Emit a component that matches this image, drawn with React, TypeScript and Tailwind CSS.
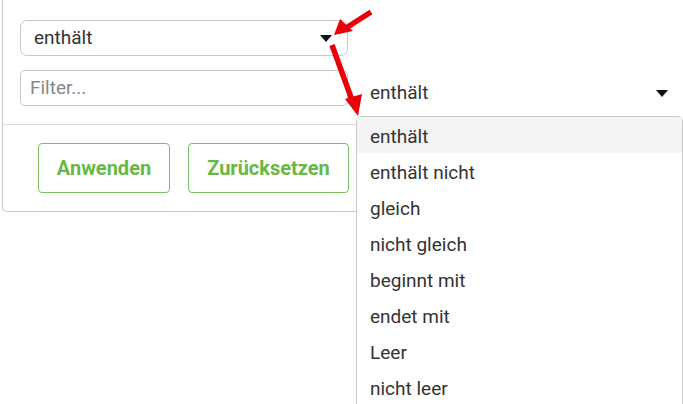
const options = [
  "enthält",
  "enthält nicht",
  "gleich",
  "nicht gleich",
  "beginnt mit",
  "endet mit",
  "Leer",
  "nicht leer",
];

function Caret() {
  return (
    <svg width="12" height="7" viewBox="0 0 12 7" className="shrink-0">
      <polygon points="0,0 12,0 6,7" fill="#111" />
    </svg>
  );
}

export default function App() {
  return (
    <div
      className="relative flex w-[683px] h-[404px] overflow-hidden bg-white text-[#333]"
      style={{ fontFamily: "Roboto, 'Liberation Sans', sans-serif" }}
    >
      {/* Filter panel */}
      <div className="ml-[2px] w-[354px] h-[212px] shrink-0 border-l border-b border-[#c8c8c8] rounded-bl-[5px] flex flex-col">
        <div className="px-[17px] pt-[20px] pb-[18px] border-b border-[#dcdcdc] flex flex-col gap-[14px]">
          <div className="w-[328px] h-[36px] border border-[#c8c8c8] rounded-[7px] flex items-center justify-between pl-[13px] pr-[15px]">
            <span className="text-[19px]">enthält</span>
            <Caret />
          </div>
          <div className="w-[328px] h-[36px] border border-[#c8c8c8] rounded-[5px] flex items-center pl-[9px]">
            <span className="text-[19px] text-[#888]">Filter...</span>
          </div>
        </div>
        <div className="flex gap-[18px] pl-[35px] pt-[18px]">
          <button className="w-[132px] h-[50px] border border-[#7cc062] rounded-[4px] text-[20px] font-bold text-[#68b845]">
            Anwenden
          </button>
          <button className="w-[161px] h-[50px] border border-[#7cc062] rounded-[4px] text-[20px] font-bold text-[#68b845]">
            Zurücksetzen
          </button>
        </div>
      </div>

      {/* Open select */}
      <div className="flex-1 flex flex-col pt-[75px]">
        <div className="h-[36px] shrink-0 flex items-center justify-between pl-[14px] pr-[15px]">
          <span className="text-[19px]">enthält</span>
          <Caret />
        </div>
        <ul className="mt-[5px] h-[320px] shrink-0 border border-[#c8c8c8] rounded-t-[5px] bg-white">
          {options.map((o, i) => (
            <li
              key={o}
              className={`h-[36px] flex items-center pl-[13px] pt-[4px] text-[19px] ${i === 0 ? "bg-[#f4f4f4]" : ""}`}
            >
              {o}
            </li>
          ))}
        </ul>
      </div>

      {/* Annotation arrows */}
      <svg className="absolute left-0 top-0 pointer-events-none" width="683" height="404">
        <line x1="371" y1="12" x2="346" y2="28" stroke="#e8000b" strokeWidth="5.5" />
        <polygon points="334,35 340,19 353,31" fill="#e8000b" />
        <line x1="332" y1="45" x2="352" y2="100" stroke="#e8000b" strokeWidth="5.5" />
        <polygon points="358,116 345,99 362,94" fill="#e8000b" />
      </svg>
    </div>
  );
}
